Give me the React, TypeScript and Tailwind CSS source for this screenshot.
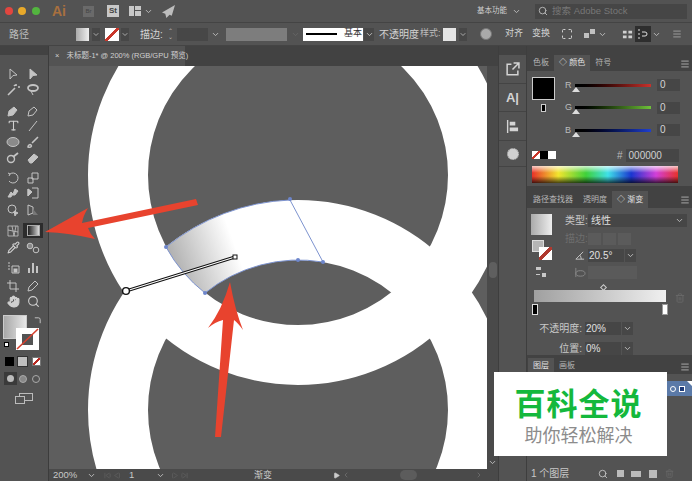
import type { ReactNode } from 'react'
import {
  ChevronDown,
  ChevronLeft,
  ChevronRight,
  Hand,
  Search,
  Pipette,
  Type,
  Menu,
  Maximize,
  Trash2,
  Play,
  SkipBack,
  SkipForward,
} from 'lucide-react'

const font = { fontFamily: '"Liberation Sans", "Noto Sans CJK SC", sans-serif' }

const Ico = ({ children }: { children: ReactNode }) => (
  <svg viewBox="0 0 14 14" className="w-[14px] h-[14px]" fill="#c4c4c4" stroke="#c4c4c4" strokeWidth="1">
    {children}
  </svg>
)

const Tool = ({ children, on }: { children: ReactNode; on?: boolean }) => (
  <div className={`w-[20px] h-[15px] flex items-center justify-center ${on ? 'bg-[#2c2c2c]' : ''}`}>{children}</div>
)

const toolRows: ReactNode[][] = [
  [
    <Ico><path d="M4 2l7 6-4 .5L4 12z" fill="none" /></Ico>,
    <Ico><path d="M4 2l7 6-4 .5L4 12z" /></Ico>,
  ],
  [
    <Ico><path d="M2 12l7-7M10 1v2M12 4h2M8 2l1 1" fill="none" strokeWidth="1.6" /></Ico>,
    <Ico><ellipse cx="7" cy="5" rx="5" ry="3" fill="none" strokeWidth="1.8" /><path d="M5 8l2 4" /></Ico>,
  ],
  [
    <Ico><path d="M2 12l1-5 5-4 3 3-4 5z" /></Ico>,
    <Ico><path d="M2 12l1-5 5-4 3 3-4 5z" fill="none" /></Ico>,
  ],
  [
    <Type size={13} color="#d0d0d0" strokeWidth={2} />,
    <Ico><path d="M3 12L11 2" fill="none" /></Ico>,
  ],
  [
    <Ico><ellipse cx="7" cy="7" rx="6" ry="4.5" fill="#8a8a8a" /></Ico>,
    <Ico><path d="M2 12c0-2 2-3 3-2s0 3-3 2zM6 8l6-6" fill="none" strokeWidth="1.6" /></Ico>,
  ],
  [
    <Ico><circle cx="5" cy="8" r="3.5" fill="none" strokeWidth="1.4" /><path d="M7 6l5-4" fill="none" strokeWidth="1.8" /></Ico>,
    <Ico><path d="M2 9l6-6 4 3-6 6H4z" /></Ico>,
  ],
  [
    <Ico><path d="M4 3a5 5 0 1 1-1 7M2 2l2 1-1 2" fill="none" /></Ico>,
    <Ico><path d="M6 2h6v6H6zM2 7h5v5H2z" fill="none" /></Ico>,
  ],
  [
    <Ico><path d="M2 11l3-5 2 2 2-5 3 2-3 4-3 0-1 2z" /></Ico>,
    <Ico><path d="M2 3l4 3-4 4zM6 2h6v10H6" fill="none" /><path d="M2 3l4 3-4 4z" /></Ico>,
  ],
  [
    <Ico><circle cx="6" cy="6" r="4" fill="none" /><path d="M8 8l4 2-2 1-1 2z" /></Ico>,
    <Ico><path d="M2 2l5 2v6l-5 2z" fill="none" /><path d="M7 6l5 6H7z" fill="#777" stroke="none" /></Ico>,
  ],
  [
    <Ico><path d="M2 2h10v10H2zM2 6l10 2M6 2l2 10M10 2L8 12" fill="none" strokeWidth=".8" /></Ico>,
    <div className="w-[13px] h-[11px] border border-[#aaa] bg-gradient-to-r from-[#222] to-[#ddd]" />,
  ],
  [
    <Pipette size={13} color="#d0d0d0" strokeWidth={2} />,
    <Ico><circle cx="4" cy="5" r="2.8" fill="#888" /><circle cx="10" cy="9" r="2.8" fill="none" /></Ico>,
  ],
  [
    <Ico><path d="M6 5h7v7H6zM2 2h2M2 5h2M2 8h2" fill="none" /><rect x="8" y="8" width="3" height="3" /></Ico>,
    <Ico><path d="M3 12V7M7 12V2M11 12V5" fill="none" strokeWidth="2" /></Ico>,
  ],
  [
    <Ico><path d="M4 1v9h9M1 4h9v9" fill="none" /></Ico>,
    <Ico><path d="M2 12l1-4 6-6 3 3-6 6z" fill="none" /></Ico>,
  ],
  [
    <Hand size={13} color="#d0d0d0" fill="#d0d0d0" />,
    <Search size={13} color="#d0d0d0" strokeWidth={2} />,
  ],
]

const rowGap = [
  'mt-[11px]',
  'mt-[1px]',
  'mt-[6px]',
  'mt-0',
  'mt-[1px]',
  'mt-[1px]',
  'mt-[5px]',
  'mt-0',
  'mt-[2px]',
  'mt-[6px]',
  'mt-[2px]',
  'mt-[5px]',
  'mt-[3px]',
  'mt-[1px]',
]

const Toolbar = () => (
  <div className="w-[49px] flex-none bg-[#535353] border-r border-[#3c3c3c] flex flex-col">
    <div className="h-[9px] bg-[#424242]" />
    <div className="flex flex-col pl-[3px]">
      {toolRows.map((row, i) => (
        <div key={i} className={`flex ${rowGap[i]}`}>
          <Tool>{row[0]}</Tool>
          <Tool on={i === 9}>{row[1]}</Tool>
        </div>
      ))}
    </div>
    <div className="relative w-[38px] h-[36px] mt-[6px] ml-[3px] flex-none">
      <div className="w-[24px] h-[24px] bg-gradient-to-r from-[#a8a8a8] to-[#e8e8e8] border border-[#ccc]" />
      <div className="absolute left-[13px] top-[13px] w-[23px] h-[22px] bg-white flex items-center justify-center">
        <div className="w-[11px] h-[11px] bg-[#535353]" />
        <svg viewBox="0 0 23 22" className="absolute inset-0">
          <path d="M1 21L22 1" stroke="#d6402e" strokeWidth="1.6" />
        </svg>
      </div>
      <svg viewBox="0 0 10 10" className="absolute left-[30px] top-[1px] w-[9px] h-[9px]" fill="none" stroke="#ccc">
        <path d="M2 2h4a2 2 0 0 1 2 2v4" />
      </svg>
      <div className="absolute left-[1px] top-[27px] w-[5px] h-[5px] bg-white border border-black" />
    </div>
    <div className="flex items-center mt-[5px] ml-[5px]">
      <div className="w-[9px] h-[9px] bg-black" />
      <div className="w-[11px] h-[11px] ml-[3px] bg-[#c0c0c0] border border-[#333]" />
      <div className="w-[9px] h-[9px] ml-[4px] bg-[linear-gradient(135deg,#fff_42%,#b82a22_42%,#b82a22_58%,#fff_58%)] border border-[#777]" />
    </div>
    <div className="flex items-center mt-[5px] ml-[4px]">
      <div className="w-[13px] h-[13px] bg-[#3a3a3a] flex items-center justify-center">
        <div className="w-[7px] h-[7px] rounded-full bg-[#bbb]" />
      </div>
      <div className="w-[8px] h-[8px] rounded-full border border-[#aaa] bg-[#888] ml-[2px]" />
      <div className="w-[8px] h-[8px] rounded-full border border-[#aaa] ml-[5px]" />
    </div>
    <div className="relative w-[14px] h-[8px] mt-[8px] ml-[19px] border border-[#bbb]">
      <div className="absolute left-[-5px] top-[2px] w-[10px] h-[8px] border border-[#bbb] bg-[#535353]" />
    </div>
  </div>
)

const Caret = () => <ChevronDown size={9} color="#bdbdbd" strokeWidth={2.5} />

const CaretBox = ({ className }: { className: string }) => (
  <div className={`h-[13px] flex-none bg-[#474747] flex items-center justify-center ${className}`}>
    <Caret />
  </div>
)

const OptionsBar = () => (
  <div className="h-[24px] flex-none flex items-center bg-[#535353] border-y border-[#444] text-[10px] text-[#d4d4d4] pl-[9px] whitespace-nowrap">
    <span className="w-[67px] flex-none text-[#bdbdbd]">路径</span>
    <div className="w-[13px] h-[13px] flex-none bg-gradient-to-r from-[#aaa] to-[#eee]" />
    <CaretBox className="w-[8px] ml-[3px]" />
    <div className="w-[14px] h-[13px] ml-[5px] flex-none bg-[linear-gradient(135deg,#fff_44%,#c9362a_44%,#c9362a_56%,#fff_56%)]" />
    <CaretBox className="w-[8px] ml-[2px]" />
    <span className="ml-[11px] w-[26px] flex-none">描边:</span>
    <div className="w-[8px] flex-none text-[6px] text-center leading-[6px] text-[#bbb]">
      ⌃
      <br />
      ⌄
    </div>
    <div className="w-[31px] h-[13px] ml-[3px] flex-none bg-[#474747]" />
    <div className="w-[9px] ml-[3px] flex-none flex justify-center"><Caret /></div>
    <div className="w-[61px] h-[13px] bg-[#7d7d7d] ml-[6px] flex-none" />
    <div className="w-[16px] flex-none flex justify-center"><ChevronDown size={9} color="#6a6a6a" /></div>
    <div className="w-[60px] h-[13px] flex-none bg-white flex items-center justify-between pl-[3px] pr-[1px] text-[#333] text-[9px]">
      <div className="w-[31px] h-[2px] bg-black" />
      基本
    </div>
    <CaretBox className="w-[10px] ml-[1px]" />
    <span className="ml-[5px] w-[40px] flex-none">不透明度</span>
    <span className="w-[24px] flex-none pl-[1px] text-[9px] text-[#bcbcbc]">样式:</span>
    <div className="w-[13px] h-[13px] bg-[#e4e4e4] flex-none" />
    <CaretBox className="w-[8px] ml-[3px]" />
    <div className="w-[12px] h-[12px] rounded-full bg-[#aaa] border border-[#777] ml-[13px] flex-none" />
    <span className="ml-[13px] w-[18px] flex-none text-[9px]">对齐</span>
    <span className="ml-[9px] w-[18px] flex-none text-[9px]">变换</span>
    <Maximize size={12} color="#d0d0d0" className="ml-[11px] flex-none" />
    <svg viewBox="0 0 14 14" className="w-[14px] h-[14px] ml-[10px] flex-none" fill="#c0c0c0">
      <path d="M1 6h5v5H1zM7 2h5v5H7z" />
    </svg>
    <div className="w-[9px] ml-[1px] flex-none flex justify-center"><Caret /></div>
    <svg viewBox="0 0 12 12" className="w-[11px] h-[11px] ml-[15px] flex-none" fill="#d0d0d0">
      <path d="M1 2h4v3H1zM7 2h4v3H7zM1 7h4v3H1zM7 7h4v3H7z" />
    </svg>
    <div className="w-[16px] h-[16px] ml-[2px] flex-none bg-[#2e2e2e] flex items-center justify-center">
      <svg viewBox="0 0 12 12" className="w-[12px] h-[12px]" stroke="#ddd" fill="none">
        <path d="M2 1v2M2 5v2M2 9v2M5 4h3a2 2 0 0 1 0 4H5" />
      </svg>
    </div>
    <div className="w-[9px] ml-[1px] flex-none flex justify-center"><Caret /></div>
    <Menu size={10} color="#aaa" className="ml-[11px] flex-none" />
  </div>
)

const TitleBar = () => (
  <div className="h-[22px] flex-none flex items-center bg-[#535353] relative">
    <div className="w-[8px] h-[8px] rounded-full bg-[#e2463f] ml-[5px]" />
    <div className="w-[8px] h-[8px] rounded-full bg-[#e8a92a] ml-[5px]" />
    <div className="w-[8px] h-[8px] rounded-full bg-[#53b53f] ml-[6px]" />
    <span className="ml-[12px] text-[14px] font-bold text-[#a8703f]">Ai</span>
    <div className="w-[11px] h-[11px] bg-[#6a6a6a] ml-[17px] text-[6px] leading-[11px] text-[#444] text-center">Br</div>
    <div className="w-[12px] h-[12px] bg-[#c8c8c8] ml-[13px] text-[8px] leading-[12px] font-bold text-[#444] text-center">St</div>
    <svg viewBox="0 0 12 10" className="w-[14px] h-[10px] ml-[9px]" fill="#c8c8c8">
      <path d="M0 0h5v10H0zM6 0h6v4H6zM6 5h6v5H6z" />
    </svg>
    <div className="ml-[2px]"><Caret /></div>
    <svg viewBox="0 0 12 12" className="w-[13px] h-[13px] ml-[9px]" fill="#bdbdbd">
      <path d="M12 0L0 7l3 1 1 4 3-3 2 1z" />
    </svg>
    <div className="ml-auto flex items-center h-full pr-[5px]">
      <span className="text-[7.5px] text-[#cfcfcf]">基本功能</span>
      <div className="ml-[5px] mr-[14px]"><Caret /></div>
      <div className="w-[152px] h-[15px] bg-[#464646] flex items-center pl-[3px] text-[9.5px] text-[#777]">
        <Search size={10} color="#bbb" strokeWidth={2.2} />
        <span className="ml-[4px] whitespace-nowrap">搜索 Adobe Stock</span>
      </div>
    </div>
  </div>
)

const Canvas = () => (
  <div className="flex-1 min-w-0 flex flex-col relative">
    <div className="h-[20px] flex-none bg-[#424242] flex">
      <div className="w-[136px] h-full bg-[#535353] flex items-center pl-[6px] text-[7.5px] text-[#d0d0d0] whitespace-nowrap">
        <span className="mr-[7px]">×</span>未标题-1* @ 200% (RGB/GPU 预览)
      </div>
    </div>
    <div className="flex-1 min-h-0 flex">
      <svg viewBox="49 66 438 403" className="w-[438px] h-full block flex-none bg-[#5e5e5e]">
        <defs>
          <linearGradient id="grad" gradientUnits="userSpaceOnUse" x1="170" y1="279" x2="238" y2="254">
            <stop offset="0" stopColor="#a6a6a6" />
            <stop offset="1" stopColor="#ffffff" />
          </linearGradient>
        </defs>
        <circle cx="298" cy="175" r="180" fill="none" stroke="#fff" strokeWidth="60" />
        <circle cx="298" cy="410" r="180" fill="none" stroke="#fff" strokeWidth="60" />
        <path
          d="M166 247A150 150 0 0 0 205 293A150 150 0 0 1 323 262L290 200A210 210 0 0 0 166 247Z"
          fill="url(#grad)"
          stroke="#7d93cf"
          strokeWidth="1"
        />
        <circle cx="166" cy="247" r="2" fill="#6d86cc" />
        <circle cx="205" cy="293" r="2" fill="#6d86cc" />
        <circle cx="323" cy="262" r="2" fill="#6d86cc" />
        <circle cx="290" cy="199" r="2" fill="#6d86cc" />
        <circle cx="298" cy="260" r="2" fill="#6d86cc" />
        <path d="M126 291L235 257" stroke="#111" strokeWidth="3.2" />
        <path d="M126 291L235 257" stroke="#fff" strokeWidth="1.2" />
        <circle cx="126" cy="291" r="3.4" fill="#fff" stroke="#111" strokeWidth="1.4" />
        <rect x="233" y="255" width="4" height="4" fill="#fff" stroke="#111" strokeWidth="1" />
      </svg>
      <div className="w-[11px] flex-none bg-[#4a4a4a] flex flex-col items-center pb-[2px]">
        <div className="w-[8px] h-[16px] rounded-full bg-[#5f5f5f] mt-[196px]" />
        <div className="mt-auto"><Caret /></div>
      </div>
    </div>
    <div className="h-[12px] flex-none bg-[#4a4a4a] flex items-center text-[9.5px] text-[#c8c8c8] leading-none whitespace-nowrap">
      <span className="ml-[4px] w-[34px] flex-none">200%</span>
      <Caret />
      <SkipBack size={7} color="#666" className="ml-[8px]" />
      <Play size={7} color="#666" className="ml-[3px] rotate-180" />
      <span className="ml-[8px] w-[27px] flex-none">1</span>
      <Caret />
      <Play size={7} color="#666" className="ml-[6px]" />
      <SkipForward size={7} color="#666" className="ml-[3px]" />
      <span className="ml-[66px] text-[9px]">渐变</span>
      <Play size={7} color="#ccc" fill="#ccc" className="ml-[61px]" />
      <ChevronLeft size={8} color="#777" className="ml-[2px]" />
      <div className="ml-[50px] w-[17px] h-[10px] rounded-full bg-[#5c5c5c]" />
      <ChevronRight size={8} color="#777" className="ml-[58px]" />
    </div>
  </div>
)

const Strip = () => (
  <div className="w-[29px] flex-none bg-[#535353] border-x border-[#3e3e3e] flex flex-col">
    <div className="h-[9px] flex-none bg-[#424242]" />
    <div className="h-[29px] border-b border-[#444] flex items-center justify-center">
      <svg viewBox="0 0 14 14" className="w-[15px] h-[15px]" fill="none" stroke="#d4d4d4" strokeWidth="1.4">
        <path d="M6 2H2v10h10V8M8 1h5v5M13 1L7 7" />
      </svg>
    </div>
    <div className="h-[28px] border-b border-[#444] flex items-center justify-center font-bold text-[13px] text-[#d4d4d4]">A|</div>
    <div className="h-[29px] border-b border-[#444] flex items-center justify-center">
      <svg viewBox="0 0 14 14" className="w-[13px] h-[13px]" fill="#d4d4d4">
        <path d="M1 0h1.5v14H1zM4 2h6v4H4zM4 8h9v4H4z" />
      </svg>
    </div>
    <div className="h-[26px] border-b border-[#444] flex items-center justify-center">
      <div className="w-[12px] h-[12px] rounded-full bg-[#d0d0d0] border border-dotted border-[#888]" />
    </div>
  </div>
)

const Tabs = ({ items, active, className }: { items: string[]; active: number; className: string }) => (
  <div className={`flex flex-none items-end bg-[#424242] pl-[1px] text-[8px] text-[#b5b5b5] relative whitespace-nowrap ${className}`}>
    {items.map((t, i) => (
      <div key={t} className={`h-full flex items-center px-[5px] ${i === active ? 'bg-[#535353] text-[#e0e0e0]' : ''}`}>
        {t}
      </div>
    ))}
    <Menu size={10} color="#bbb" className="absolute right-[2px] top-[4px]" />
  </div>
)

const ColorRow = ({ label, bar }: { label: string; bar: string }) => (
  <div className="flex items-center h-[22.5px]">
    <span className="w-[10px] text-[9px] text-[#bbb]">{label}</span>
    <div className="relative w-[76px]">
      <div className={`h-[3px] ${bar}`} />
      <div className="absolute left-[-3px] top-[3px] w-0 h-0 border-x-[4px] border-b-[5px] border-x-transparent border-b-[#ddd]" />
    </div>
    <div className="ml-[6px] w-[23px] h-[12px] bg-[#464646] text-[10px] leading-[12px] pl-[3px] text-[#d4d4d4]">0</div>
  </div>
)

const GradientPanel = () => (
  <div className="h-[147px] flex-none px-[4px] relative text-[10px] text-[#c8c8c8] whitespace-nowrap">
    <div className="flex mt-[6px]">
      <div className="w-[21px] flex-none flex flex-col">
        <div className="w-[21px] h-[21px] bg-gradient-to-r from-[#aaa] to-[#eee]" />
        <div className="relative w-[21px] h-[20px] mt-[5px] ml-[1px]">
          <div className="w-[12px] h-[12px] bg-[#b5b5b5] border border-[#ddd]" />
          <div className="absolute left-[7px] top-[7px] w-[13px] h-[13px] bg-[linear-gradient(135deg,#fff_40%,#b0392f_40%,#b0392f_60%,#fff_60%)]" />
        </div>
        <svg viewBox="0 0 12 12" className="w-[12px] h-[12px] ml-[4px] mt-[6px]" fill="#c8c8c8">
          <path d="M1 1h5v3H1zM7 7h4v4H7zM1 8h4v1H1z" />
        </svg>
      </div>
      <div className="ml-[13px] flex flex-col">
        <div className="flex h-[13px] items-center">
          <span className="w-[20px] flex-none">类型:</span>
          <div className="ml-[3px] w-[99px] h-[13px] bg-[#464646] flex items-center justify-between px-[3px] text-[#e0e0e0]">
            线性
            <Caret />
          </div>
        </div>
        <div className="flex h-[13px] items-center mt-[5px]">
          <span className="w-[20px] flex-none text-[#6e6e6e]">描边:</span>
          <div className="ml-[3px] flex gap-[2px]">
            {[0, 1, 2].map((i) => (
              <div key={i} className="w-[13px] h-[12px] bg-[#5b5b5b]" />
            ))}
          </div>
        </div>
        <div className="flex h-[13px] items-center ml-[9px] mt-[4px]">
          <svg viewBox="0 0 12 12" className="w-[11px] h-[11px]" fill="none" stroke="#c8c8c8">
            <path d="M10 2L2 10h9M7 6l1 4" />
          </svg>
          <div className="ml-[3px] w-[36px] h-[13px] bg-[#464646] pl-[1px] text-[#e0e0e0] leading-[13px]">20.5°</div>
          <CaretBox className="w-[11px] ml-[1px]" />
        </div>
        <div className="flex h-[13px] items-center ml-[8px] mt-[4px]">
          <svg viewBox="0 0 14 12" className="w-[13px] h-[11px]" fill="none" stroke="#8a8a8a">
            <ellipse cx="8" cy="7" rx="5" ry="3" />
            <path d="M3 1v10" />
          </svg>
          <div className="ml-[2px] w-[49px] h-[13px] bg-[#5a5a5a]" />
        </div>
      </div>
    </div>
    <div className="w-[5px] h-[5px] rotate-45 border border-[#ccc] ml-[70px] mt-[6px]" />
    <div className="w-[132px] h-[12px] ml-[3px] bg-gradient-to-r from-[#a0a0a0] to-[#f0f0f0]" />
    <div className="flex justify-between w-[136px] ml-[1px] mt-[2px]">
      <div className="w-[6px] h-[11px] bg-black border border-[#ddd]" />
      <div className="w-[6px] h-[11px] bg-white border border-[#999]" />
    </div>
    <Trash2 size={10} color="#6a6a6a" className="absolute right-[7px] top-[85px]" />
    <div className="flex items-center justify-end w-[102px] mt-[6px]">
      <span>不透明度:</span>
      <div className="ml-[3px] w-[36px] h-[13px] bg-[#464646] pl-[1px] text-[#e0e0e0] leading-[13px]">20%</div>
      <CaretBox className="w-[11px] ml-[1px]" />
    </div>
    <div className="flex items-center justify-end w-[102px] mt-[5px]">
      <span>位置:</span>
      <div className="ml-[3px] w-[36px] h-[13px] bg-[#464646] pl-[1px] text-[#e0e0e0] leading-[13px]">0%</div>
      <CaretBox className="w-[11px] ml-[1px]" />
    </div>
  </div>
)

const Panels = () => (
  <div className="w-[165px] flex-none flex flex-col bg-[#535353]">
    <div className="h-[9px] flex-none bg-[#424242]" />
    <Tabs items={['色板', '◇ 颜色', '符号']} active={1} className="h-[16px]" />
    <div className="h-[115px] flex-none px-[5px] relative">
      <div className="flex">
        <div className="mt-[6px]">
          <div className="w-[23px] h-[23px] bg-black border border-[#ccc]" />
          <div className="w-[5px] h-[8px] mx-auto mt-[4px] bg-black border border-[#ccc]" />
        </div>
        <div className="ml-[10px] mt-[3px]">
          <ColorRow label="R" bar="bg-gradient-to-r from-black to-[#c9322c]" />
          <ColorRow label="G" bar="bg-gradient-to-r from-black to-[#6fc23a]" />
          <ColorRow label="B" bar="bg-gradient-to-r from-black to-[#1f3fd0]" />
        </div>
      </div>
      <div className="flex items-center mt-[6px]">
        <div className="w-[8px] h-[8px] bg-[linear-gradient(135deg,#fff_42%,#c9362a_42%,#c9362a_58%,#fff_58%)]" />
        <div className="w-[8px] h-[8px] bg-black" />
        <div className="w-[8px] h-[8px] bg-white" />
        <span className="ml-[61px] text-[10px] text-[#bbb]">#</span>
        <div className="ml-[3px] w-[53px] h-[13px] bg-[#464646] text-[10px] leading-[13px] pl-[3px] text-[#d0d0d0]">000000</div>
      </div>
      <div className="mt-[3px] w-[146px] h-[17px] bg-[linear-gradient(to_bottom,rgba(255,255,255,0.75),transparent_40%,transparent_60%,rgba(0,0,0,0.7)),linear-gradient(to_right,#e8322a,#f2e52e_18%,#3fd13a_37%,#3fe0e8_52%,#1a36d0_68%,#d23fd8_85%,#e8322a)]" />
    </div>
    <div className="h-[5px] flex-none bg-[#424242]" />
    <Tabs items={['路径查找器', '透明度', '◇ 渐变']} active={2} className="h-[17px]" />
    <GradientPanel />
    <div className="h-[3px] flex-none bg-[#424242]" />
    <Tabs items={['图层', '画板']} active={0} className="h-[16px]" />
    <div className="flex-1 min-h-0 relative">
      <div className="relative h-[15px] mt-[7px] bg-[#5b7aa8] flex items-center justify-end pr-[7px] gap-[3px]">
        <div className="w-[6px] h-[6px] rounded-full border border-white" />
        <div className="w-[6px] h-[6px] bg-[#1d3a78] border border-white" />
        <div className="absolute right-0 top-0 w-0 h-0 border-l-[5px] border-b-[5px] border-l-transparent border-b-transparent border-t-0 border-r-[5px] border-r-white" />
      </div>
    </div>
    <div className="h-[15px] flex-none flex items-center pl-[4px] pr-[18px] text-[10px] text-[#c8c8c8] whitespace-nowrap">
      1 个图层
      <Search size={10} className="ml-auto" color="#ccc" />
      <div className="w-[7px] h-[7px] bg-[#bbb] ml-[9px]" />
      <div className="w-[10px] h-[6px] bg-[#bbb] ml-[7px]" />
      <div className="w-[8px] h-[8px] bg-[#bbb] ml-[8px]" />
      <Trash2 size={9} color="#6a6a6a" className="ml-[8px]" />
    </div>
  </div>
)

export default function App() {
  return (
    <div className="relative w-[692px] h-[481px] overflow-hidden bg-[#535353] flex flex-col" style={font}>
      <TitleBar />
      <OptionsBar />
      <div className="flex-1 min-h-0 flex">
        <Toolbar />
        <Canvas />
        <Strip />
        <Panels />
      </div>
      {/* annotation layer from the screenshot */}
      <svg viewBox="0 0 692 481" className="absolute inset-0 w-full h-full pointer-events-none">
        <path d="M45 232L88 208Q83 216 82 223L196 199L198 205L88 228Q90 234 95 239Q70 233 45 232Z" fill="#e8432e" />
        <path d="M230 282Q235 310 243 330Q238 323 234 320L221 437L215 437L223 320Q215 322 208 328Q222 310 230 282Z" fill="#e8432e" />
      </svg>
      <div className="absolute left-[494px] top-[372px] w-[173px] h-[84px] bg-white flex flex-col items-center pt-[15px] pr-[4px]">
        <span className="text-[31px] leading-[36px] font-bold text-[#14b83c] tracking-[1px]">百科全说</span>
        <span className="text-[18px] leading-[22px] mt-[2px] text-[#8c8c8c]">助你轻松解决</span>
      </div>
    </div>
  )
}
